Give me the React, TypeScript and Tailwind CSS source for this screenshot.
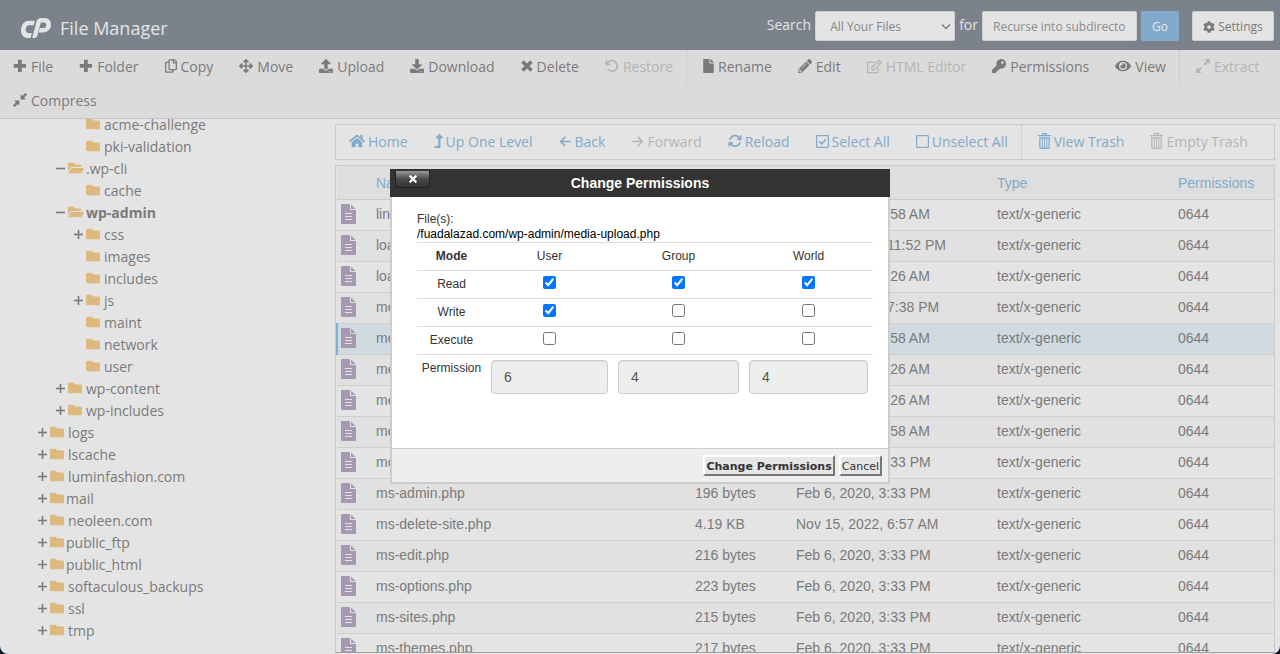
import type { ReactNode } from "react";
import {
  FaArrowsAlt, FaCog, FaDownload, FaEye, FaFile, FaFolder, FaFolderOpen, FaHome,
  FaKey, FaLevelUpAlt, FaPencilAlt, FaRegCopy, FaRegEdit, FaUpload,
} from "react-icons/fa";
import { FaArrowLeft, FaArrowRight, FaArrowRotateLeft, FaArrowsRotate, FaChevronDown } from "react-icons/fa6";

const Plus = () => (
  <svg width="14" height="14" viewBox="0 0 14 14" fill="currentColor">
    <path d="M5 .8h3.800v4.200H13v3.800H8.800V13H5V8.800H.8V5H5z" />
  </svg>
);

const Cross = () => (
  <svg width="12" height="12" viewBox="0 0 12 12" stroke="currentColor" strokeWidth="3.600">
    <path d="M1.500 1.500l9 9M10.500 1.500l-9 9" />
  </svg>
);

const Expand = () => (
  <svg width="14" height="14" viewBox="0 0 14 14" fill="currentColor">
    <path d="M8.500 0H14v5.500l-1.900-1.900-3 3-1.700-1.700 3-3zM5.500 14H0V8.500l1.900 1.900 2.300-2.300 1.700 1.700-2.300 2.300z" />
  </svg>
);

const Compress = () => (
  <svg width="14" height="14" viewBox="0 0 14 14" fill="currentColor">
    <path d="M7.600 6.400V1.200l1.700 1.700L12.200 0 14 1.800l-2.900 2.900 1.700 1.700zM6.400 7.600v5.200l-1.700-1.700L1.800 14 0 12.200l2.900-2.900-1.700-1.700z" />
  </svg>
);

const Box = ({ checked }: { checked?: boolean }) => (
  <svg width="13" height="13" viewBox="0 0 13 13" fill="none" stroke="currentColor">
    <rect x=".6" y=".6" width="11.800" height="11.800" rx=".8" strokeWidth="1.200" />
    {checked && <path d="M3.200 6.300l2.400 2.500 4.300-4.600" strokeWidth="1.500" />}
  </svg>
);

const Trash = () => (
  <svg width="13" height="16" viewBox="0 0 13 16" fill="none" stroke="currentColor">
    <path d="M4.500 2.200V.6h4v1.600M0 2.700h13M1.800 4.800h9.400v9.600a1 1 0 0 1-1 1H2.800a1 1 0 0 1-1-1z" strokeWidth="1.200" />
    <path d="M4.200 5v10M6.500 5v10M8.800 5v10" />
  </svg>
);

const TextFile = () => (
  <svg className="block" width="15" height="20" viewBox="0 0 15 20" fill="#a798b2">
    <path d="M1 0h8v6h6v13a1 1 0 0 1-1 1H1a1 1 0 0 1-1-1V1a1 1 0 0 1 1-1z" />
    <path d="M10 .4L14.600 5H10z" />
    <path d="M4 9.500h7M4 12.500h7M4 15.500h7" stroke="#e4e4e4" />
  </svg>
);

const Logo = () => (
  <svg width="30" height="20" viewBox="0 0 30 20" fill="#e4e4e4">
    <path d="M7.500 2.800h6.300l-1.100 4.400H7.700C4.100 7.200 3.600 15 7.300 15h3.500l-1.200 4.900H7C2.500 19.900 0 16.400 0 12.400 0 7.200 3.300 2.800 7.500 2.800z" />
    <path d="M15.500 3.600C16.100 1.300 17.600 0 20 0h3.500C27.600 0 30 2.700 30 6.300c0 4.700-3.300 8.200-7.400 8.200h-4.900l1.100-4.400h3.600c3.500 0 3.900-5.700.7-5.700h-2.500c-.6 0-.9.3-1.100 1l-3.100 12.100c-.5 1.700-1.500 2.500-3.200 2.500h-2z" />
  </svg>
);

type Action = { label: string; icon: ReactNode; disabled?: boolean; divider?: boolean };

const toolbar: Action[] = [
  { label: "File", icon: <Plus /> },
  { label: "Folder", icon: <Plus /> },
  { label: "Copy", icon: <FaRegCopy className="w-3" size={14} /> },
  { label: "Move", icon: <FaArrowsAlt size={14} /> },
  { label: "Upload", icon: <FaUpload size={14} /> },
  { label: "Download", icon: <FaDownload size={14} /> },
  { label: "Delete", icon: <Cross /> },
  { label: "Restore", icon: <FaArrowRotateLeft size={14} />, disabled: true },
  { label: "Rename", icon: <FaFile className="w-[11px]" size={14} />, divider: true },
  { label: "Edit", icon: <FaPencilAlt size={14} /> },
  { label: "HTML Editor", icon: <FaRegEdit size={15} />, disabled: true },
  { label: "Permissions", icon: <FaKey size={14} /> },
  { label: "View", icon: <FaEye size={16} /> },
  { label: "Extract", icon: <Expand />, disabled: true, divider: true },
  { label: "Compress", icon: <Compress /> },
];

const navigation: Action[] = [
  { label: "Home", icon: <FaHome size={16} /> },
  { label: "Up One Level", icon: <FaLevelUpAlt className="w-[9px]" size={14} /> },
  { label: "Back", icon: <FaArrowLeft size={13} /> },
  { label: "Forward", icon: <FaArrowRight size={13} />, disabled: true },
  { label: "Reload", icon: <FaArrowsRotate size={14} /> },
  { label: "Select All", icon: <Box checked /> },
  { label: "Unselect All", icon: <Box /> },
  { label: "View Trash", icon: <Trash />, divider: true },
  { label: "Empty Trash", icon: <Trash />, disabled: true },
];

type Folder = { name: string; level: number; toggle?: string; open?: boolean; bold?: boolean; special?: boolean };

const folders: Folder[] = [
  { name: "acme-challenge", level: 2 },
  { name: "pki-validation", level: 2 },
  { name: ".wp-cli", level: 1, toggle: "-", open: true },
  { name: "cache", level: 2 },
  { name: "wp-admin", level: 1, toggle: "-", open: true, bold: true },
  { name: "css", level: 2, toggle: "+" },
  { name: "images", level: 2 },
  { name: "includes", level: 2 },
  { name: "js", level: 2, toggle: "+" },
  { name: "maint", level: 2 },
  { name: "network", level: 2 },
  { name: "user", level: 2 },
  { name: "wp-content", level: 1, toggle: "+" },
  { name: "wp-includes", level: 1, toggle: "+" },
  { name: "logs", level: 0, toggle: "+" },
  { name: "lscache", level: 0, toggle: "+" },
  { name: "luminfashion.com", level: 0, toggle: "+" },
  { name: "mail", level: 0, toggle: "+", special: true },
  { name: "neoleen.com", level: 0, toggle: "+" },
  { name: "public_ftp", level: 0, toggle: "+", special: true },
  { name: "public_html", level: 0, toggle: "+", special: true },
  { name: "softaculous_backups", level: 0, toggle: "+" },
  { name: "ssl", level: 0, toggle: "+" },
  { name: "tmp", level: 0, toggle: "+" },
];

const indent = ["pl-[38px]", "pl-[56px]", "pl-[74px]"];

const files = [
  ["link.php", "712 bytes", "Feb 6, 2020, 6:58 AM"],
  ["load-scripts.php", "1.98 KB", "Nov 15, 2022, 11:52 PM"],
  ["load-styles.php", "2.85 KB", "Feb 6, 2020, 6:26 AM"],
  ["media-new.php", "3.14 KB", "Nov 15, 2022, 7:38 PM"],
  ["media-upload.php", "3.5 KB", "Feb 6, 2020, 6:58 AM"],
  ["media.php", "796 bytes", "Feb 6, 2020, 6:26 AM"],
  ["menu-header.php", "9.6 KB", "Feb 6, 2020, 6:26 AM"],
  ["menu.php", "16.9 KB", "Feb 6, 2020, 6:58 AM"],
  ["moderation.php", "307 bytes", "Feb 6, 2020, 3:33 PM"],
  ["ms-admin.php", "196 bytes", "Feb 6, 2020, 3:33 PM"],
  ["ms-delete-site.php", "4.19 KB", "Nov 15, 2022, 6:57 AM"],
  ["ms-edit.php", "216 bytes", "Feb 6, 2020, 3:33 PM"],
  ["ms-options.php", "223 bytes", "Feb 6, 2020, 3:33 PM"],
  ["ms-sites.php", "215 bytes", "Feb 6, 2020, 3:33 PM"],
  ["ms-themes.php", "217 bytes", "Feb 6, 2020, 3:33 PM"],
];

const modes = [
  { name: "Read", checked: [true, true, true] },
  { name: "Write", checked: [true, false, false] },
  { name: "Execute", checked: [false, false, false] },
];

const groups = ["User", "Group", "World"];

function ActionButton({ action, tight }: { action: Action; tight?: boolean }) {
  return (
    <button
      disabled={action.disabled}
      className={`flex h-[34px] items-center whitespace-nowrap pb-[2px] pr-[13px] disabled:text-[#b5b5b5] ${
        tight ? "gap-[3px]" : "gap-1"
      } ${action.divider ? "border-l border-dotted border-[#bfbfbf] pl-4" : "pl-[13px]"}`}
    >
      {action.icon}
      {action.label}
    </button>
  );
}

function Header() {
  return (
    <header className="flex h-[50px] shrink-0 items-center justify-between bg-[#7b828b] pl-[21px] pr-[6px] text-[#e4e4e4]">
      <div className="flex items-center gap-[9px] pt-[6px]">
        <Logo />
        <h1 className="text-[18px] leading-6">File Manager</h1>
      </div>
      <form className="flex items-center gap-1 pt-[2px] text-[12px]" onSubmit={(e) => e.preventDefault()}>
        <label htmlFor="scope" className="pb-1 text-[14px]">Search</label>
        <div className="relative">
          <select id="scope" className="block h-[30px] w-[140px] appearance-none rounded-xs border border-[#cfcfcf] bg-[#e4e4e4] pl-[14px] pt-px text-[12px] text-[#858585]">
            <option>All Your Files</option>
          </select>
          <FaChevronDown className="pointer-events-none absolute right-1 top-[10px] text-[#7a7a7a]" size={10} />
        </div>
        <label htmlFor="query" className="pb-1 text-[14px]">for</label>
        <input
          id="query"
          placeholder="Recurse into subdirecto"
          className="h-[30px] w-[155px] rounded-xs border border-[#cfcfcf] bg-[#e4e4e4] px-[10px] pt-px text-[12px] placeholder:text-[#8c8c8c]"
        />
        <button className="h-[30px] w-[38px] rounded-xs bg-[#81aacc] pt-px">Go</button>
        <button type="button" className="ml-[9px] flex h-[30px] w-[82px] items-center justify-center gap-[3px] rounded-xs border border-[#cfcfcf] bg-[#e4e4e4] pt-px text-[#7a7a7a]">
          <FaCog size={12} />
          Settings
        </button>
      </form>
    </header>
  );
}

function Toggle({ sign }: { sign?: string }) {
  return (
    <svg className="mr-[3px] shrink-0" width="9" height="9" viewBox="0 0 9 9" stroke="currentColor" strokeWidth="1.600">
      {sign && <path d="M0 4.500h9" />}
      {sign === "+" && <path d="M4.500 0v9" />}
    </svg>
  );
}

function FolderTree() {
  return (
    <nav className="w-[335px] shrink-0 overflow-hidden">
      <ul className="-mt-[6px]">
        {folders.map((f) => (
          <li key={f.name} className={`flex h-[22px] items-center ${indent[f.level]}`}>
            <Toggle sign={f.toggle} />
            {f.open ? (
              <FaFolderOpen className="mr-[2px] text-[#ddb97f]" size={16} />
            ) : (
              <FaFolder className={f.special ? "mr-[2px] text-[#ddb97f]" : "mr-1 text-[#ddb97f]"} size={14} />
            )}
            <a href="#" className={f.bold ? "font-bold" : ""}>{f.name}</a>
          </li>
        ))}
      </ul>
    </nav>
  );
}

function FileTable() {
  return (
    <div className="mt-[5px] min-h-0 flex-1 overflow-hidden border border-b-[#a3a3a3] border-[#cacaca]">
      <table className="w-full table-fixed font-['Liberation_Sans',sans-serif]">
        <colgroup>
          <col className="w-[39px]" />
          <col />
          <col className="w-[101px]" />
          <col className="w-[201px]" />
          <col className="w-[181px]" />
          <col className="w-24" />
        </colgroup>
        <thead>
          <tr className="h-[33px] border-b border-[#cacaca] bg-[#dedede] text-left text-[#81aacc]">
            <th />
            <th className="pt-[2px] font-medium">Name</th>
            <th className="pt-[2px] font-medium">Size</th>
            <th className="pt-[2px] font-medium">Last Modified</th>
            <th className="pt-[2px] font-medium">Type</th>
            <th className="pt-[2px] font-medium">Permissions</th>
          </tr>
        </thead>
        <tbody>
          {files.map(([name, size, modified], i) => (
            <tr
              key={name}
              className={`h-[31px] border-b border-[#cfcfcf] ${i === 4 ? "bg-[#cfdbe1]" : "odd:bg-[#e4e4e4] even:bg-[#e1e1e1]"}`}
            >
              <td className={i === 4 ? "border-l-2 border-l-[#7ab2cf] pb-[2px] pl-[3px]" : "pb-[2px] pl-1"}><TextFile /></td>
              <td>{name}</td>
              <td>{size}</td>
              <td>{modified}</td>
              <td>text/x-generic</td>
              <td>0644</td>
            </tr>
          ))}
        </tbody>
      </table>
    </div>
  );
}

function PermissionsDialog() {
  return (
    <div className="fixed inset-0 flex items-start justify-center pt-[169px] font-['Liberation_Sans',sans-serif] text-[12px] text-[#333]">
      <div role="dialog" aria-labelledby="dialog-title" className="w-[500px]">
        <div className="relative flex h-7 items-center justify-center bg-[#333]">
          <button
            aria-label="Close"
            className="absolute left-[5px] top-[2px] flex h-[17px] w-[35px] items-center justify-center rounded-b border border-t-0 border-[#1f2224] bg-linear-to-b from-[#9a9a9a] via-[#4a4a4a] via-50% to-[#333] text-white"
          >
            <svg width="8" height="8" viewBox="0 0 8 8" stroke="currentColor" strokeWidth="2.200">
              <path d="M.6.6l6.800 6.800M7.400.6L.6 7.400" />
            </svg>
          </button>
          <h2 id="dialog-title" className="text-[14px] font-bold text-white">Change Permissions</h2>
        </div>
        <div className="border-2 border-t-0 border-[#ccc] bg-white">
          <div className="min-h-[251px] pl-[25px] pr-[15px] pt-[15px] leading-[15px]">
            <p>File(s):</p>
            <p className="text-black">/fuadalazad.com/wp-admin/media-upload.php</p>
            <table className="w-full table-fixed text-center">
              <colgroup>
                <col className="w-[69px]" />
                <col className="w-[127px]" />
                <col className="w-[131px]" />
                <col />
              </colgroup>
              <thead>
                <tr className="h-7 border-t border-[#ddd]">
                  <th>Mode</th>
                  {groups.map((g) => <td key={g}>{g}</td>)}
                </tr>
              </thead>
              <tbody>
                {modes.map((m) => (
                  <tr key={m.name} className="h-7 border-t border-[#ddd]">
                    <td>{m.name}</td>
                    {m.checked.map((on, i) => (
                      <td key={i} className="pb-1">
                        <input type="checkbox" aria-label={`${groups[i]} ${m.name}`} defaultChecked={on} className="mx-auto block size-[13px]" />
                      </td>
                    ))}
                  </tr>
                ))}
                <tr className="border-t border-[#ddd] align-top">
                  <td className="pt-[6px]">Permission</td>
                  {["6", "4", "4"].map((v, i) => (
                    <td key={i} className="p-[5px]">
                      <input
                        readOnly
                        aria-label={`${groups[i]} permission`}
                        defaultValue={v}
                        className="block h-[34px] w-full rounded border border-[#ccc] bg-[#eee] px-3 text-[14px] text-[#555] shadow-[inset_0_1px_1px_rgba(0,0,0,0.075)]"
                      />
                    </td>
                  ))}
                </tr>
              </tbody>
            </table>
          </div>
          <div className="flex h-[34px] items-center justify-end gap-1 border-t border-[#ccc] bg-[#eee] pr-[6px] font-['DejaVu_Sans',sans-serif] text-[11px]">
            <button className="h-[21px] border-2 border-b-[#777] border-l-white border-r-[#777] border-t-white bg-[#e6e6e6] px-px pt-[2px] font-bold">
              Change Permissions
            </button>
            <button className="h-[21px] border-2 border-b-[#777] border-l-white border-r-[#777] border-t-white bg-[#e6e6e6] px-px pt-[2px]">
              Cancel
            </button>
          </div>
        </div>
      </div>
    </div>
  );
}

export default function App() {
  return (
    <div className="h-screen bg-[#0b1622] font-['Open_Sans',sans-serif] text-[14px] text-[#7a7a7a]">
      <div className="flex h-full flex-col overflow-hidden rounded-b-lg bg-[#e4e4e4]">
        <Header />
        <div className="flex shrink-0 flex-wrap border-b border-[#c6c6c6] bg-[#dbdbdb]">
          {toolbar.map((a) => <ActionButton key={a.label} action={a} />)}
        </div>
        <div className="flex min-h-0 flex-1">
          <FolderTree />
          <main className="flex min-w-0 flex-1 flex-col pb-px pr-[5px] pt-[5px]">
            <div className="flex flex-wrap border border-[#cacaca] text-[#81aacc]">
              {navigation.map((a) => <ActionButton key={a.label} action={a} tight />)}
            </div>
            <FileTable />
          </main>
        </div>
      </div>
      <PermissionsDialog />
    </div>
  );
}
